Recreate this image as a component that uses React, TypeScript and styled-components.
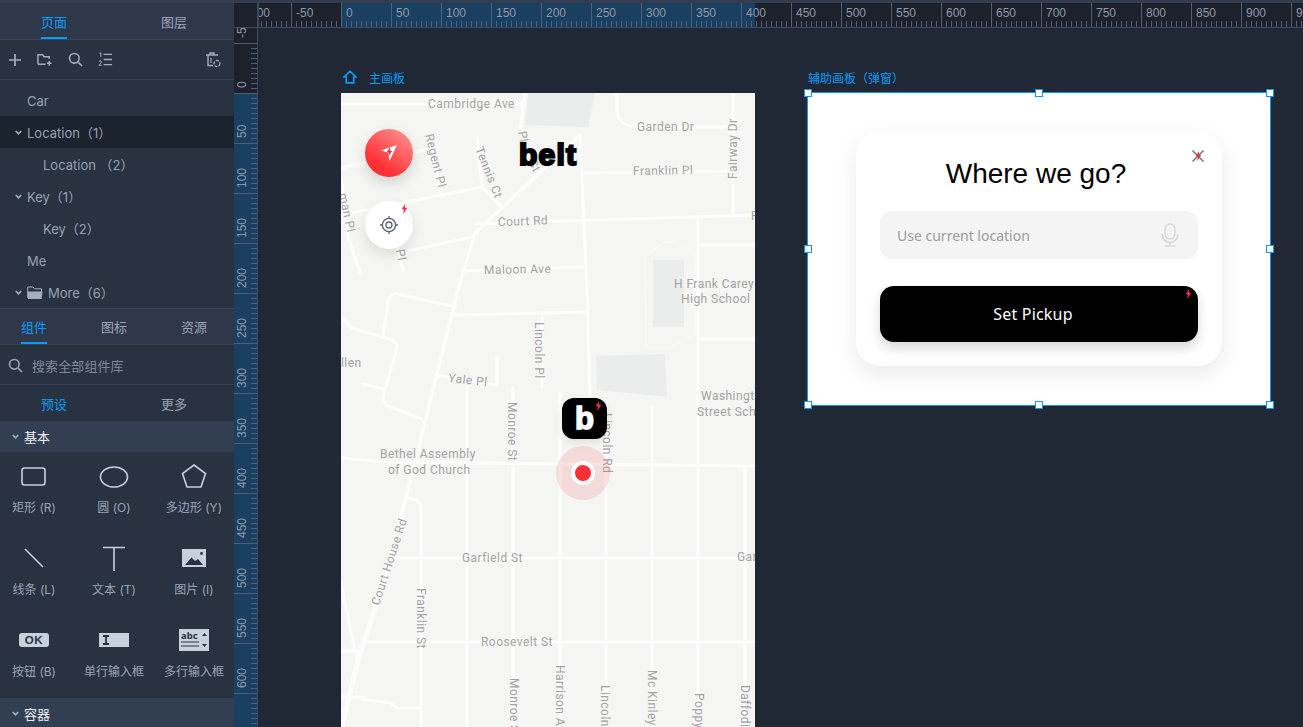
import React from "react";
import styled, { createGlobalStyle } from "styled-components";

const UI = `Inter, "Noto Sans CJK SC", sans-serif`;
const BLUE = "#0a9bf5";

const Global = createGlobalStyle`
  html, body { margin: 0; padding: 0; height: 100%; background: #202836; overflow: hidden; }
  #root { height: 100%; }
  * { box-sizing: border-box; }
`;

const Root = styled.div`
  width: 1303px; height: 727px; display: flex; flex-direction: column; overflow: hidden;
  font-family: ${UI}; background: #202836;
`;
const TopStrip = styled.div` height: 3px; flex: none; background: #323d50; `;
const Body = styled.div` flex: 1; display: flex; min-height: 0; `;

const Sidebar = styled.aside`
  width: 234px; flex: none; background: #293241; color: #9aa5b8; display: flex; flex-direction: column; overflow: hidden;
`;
const TabBar = styled.div<{ $h: number }>`
  height: ${p => p.$h}px; flex: none; display: flex; background: #2e384a; border-bottom: 1px solid #38445a;
  & > :first-child { margin-left: -6px; }
`;
const Tab = styled.div<{ $active?: boolean; $w: number }>`
  flex: none; width: ${p => p.$w}px; display: flex; justify-content: center; align-items: center; font-size: 13px;
  color: ${p => (p.$active ? BLUE : "#9aa5b8")};
`;
const TabLabel = styled.span<{ $active?: boolean }>`
  height: 100%; display: flex; align-items: center; padding-top: 2px;
  border-bottom: 2px solid ${p => (p.$active ? BLUE : "transparent")};
`;
const Toolbar = styled.div`
  height: 40px; flex: none; display: flex; align-items: center; padding: 0 13px 0 8px; gap: 15px;
  border-bottom: 1px solid #38445a; color: #a3aec0;
`;
const Spacer = styled.div` flex: 1; `;
const Tree = styled.div` flex: none; padding-top: 4px; height: 229px; border-bottom: 1px solid #38445a; `;
const TreeRow = styled.div<{ $indent: number; $selected?: boolean }>`
  height: 32px; display: flex; align-items: center; font-size: 13px; white-space: pre; color: #97a2b5;
  padding: 1px 0 0 ${p => p.$indent}px;
  background: ${p => (p.$selected ? "#1b232e" : "transparent")};
`;
const Caret = styled.svg` width: 7px; height: 5px; margin-right: 5px; flex: none; color: #a3aec0; `;
const FolderIcon = styled.svg` width: 16px; height: 14px; margin-right: 5px; flex: none; `;
const SearchRow = styled.div`
  height: 40px; flex: none; display: flex; align-items: center; gap: 9px; padding: 1px 0 0 8px;
  font-size: 13px; color: #7f8a9c; border-bottom: 1px solid #38445a; letter-spacing: 0.1px;
`;
const SubTabs = styled.div`
  height: 36px; flex: none; display: flex;
  & > :first-child { margin-left: -6px; }
`;
const SectionHead = styled.div`
  height: 31px; flex: none; display: flex; align-items: center; padding-left: 12px;
  background: #323f52; color: #eef1f5; font-size: 13px;
`;
const WidgetGrid = styled.div`
  height: 246px; flex: none; display: grid; grid-template-columns: repeat(3, 80px); grid-auto-rows: 82px; margin-left: -6px;
`;
const Widget = styled.div`
  display: flex; flex-direction: column; align-items: center; font-size: 12px; color: #9aa5b8; white-space: nowrap;
`;
const WidgetIcon = styled.svg` width: 36px; height: 32px; margin-top: 8px; flex: none; color: #c7d0dd; `;
const WidgetName = styled.span` margin-top: 7px; line-height: 18px; `;

const Workspace = styled.div` flex: 1; display: flex; flex-direction: column; min-width: 0; `;
const RulerRow = styled.div` height: 25px; flex: none; display: flex; `;
const RulerCorner = styled.div` width: 24px; flex: none; background: #1c212c; border-bottom: 1px solid #3d4a60; border-right: 1px solid #3d4a60; `;
const WorkRow = styled.div` flex: 1; display: flex; min-height: 0; `;
const RulerSvg = styled.svg` display: block; flex: none; background: #1c212c; `;
const Canvas = styled.main` flex: 1; position: relative; overflow: hidden; background: #202836; `;

const BoardLabel = styled.div<{ $x: number; $y: number }>`
  position: absolute; left: ${p => p.$x}px; top: ${p => p.$y}px; height: 16px; display: flex; align-items: center;
  gap: 12px; font-size: 12px; color: ${BLUE}; white-space: nowrap;
`;
const MapBoard = styled.section`
  position: absolute; left: 83px; top: 65px; width: 414px; height: 634px; background: #f5f5f4; overflow: hidden;
`;
const Fab = styled.div<{ $x: number; $y: number; $red?: boolean }>`
  position: absolute; left: ${p => p.$x}px; top: ${p => p.$y}px; width: 48px; height: 48px; border-radius: 50%;
  display: flex; align-items: center; justify-content: center;
  background: ${p => (p.$red ? "linear-gradient(215deg, #ff9a9a 0%, #ff2f33 75%)" : "#fff")};
  box-shadow: 0 6px 14px rgba(0, 0, 0, ${p => (p.$red ? 0.14 : 0.1)});
`;
const Belt = styled.div`
  position: absolute; left: 178px; top: 44px; font: 900 30px/36px "Liberation Sans", Arial, sans-serif; color: #000;
  -webkit-text-stroke: 2.2px #000; letter-spacing: 1.2px;
`;
const LogoTile = styled.div`
  position: absolute; left: 221px; top: 305px; width: 45px; height: 41px; border-radius: 12px; background: #000;
  display: flex; align-items: center; justify-content: center; color: #fff;
  font: 900 31px/1 "Liberation Sans", Arial, sans-serif; -webkit-text-stroke: 1.6px #fff;
  box-shadow: 0 3px 8px rgba(0, 0, 0, 0.1);
`;
const PinHalo = styled.div`
  position: absolute; left: 215px; top: 353px; width: 54px; height: 54px; border-radius: 50%;
  background: rgba(240, 110, 105, 0.2); display: flex; align-items: center; justify-content: center;
`;
const PinDot = styled.div`
  width: 24px; height: 24px; border-radius: 50%; background: #ff2f33; border: 4px solid #fff;
`;
const BoltMark = styled.svg<{ $x: number; $y: number }>`
  position: absolute; display: block; left: ${p => p.$x}px; top: ${p => p.$y}px; width: 7px; height: 10px;
`;
const ModalBoard = styled.section`
  position: absolute; left: 549px; top: 64px; width: 464px; height: 314px; background: #fff; border: 1px solid #1296f3;
  display: flex; align-items: flex-start; justify-content: center; padding-top: 38px;
`;
const Handle = styled.span<{ $x: number; $y: number }>`
  position: absolute; left: ${p => p.$x}%; top: ${p => p.$y}%; width: 8px; height: 8px; margin: -4px 0 0 -4px;
  background: #fff; border: 1px solid #1296f3;
`;
const Card = styled.div`
  position: relative; width: 366px; height: 235px; border-radius: 24px; background: #fff; padding: 23px 24px 0;
  box-shadow: 0 8px 22px rgba(0, 0, 0, 0.09);
`;
const Title = styled.h1`
  margin: 0 6px 17px 0; font: 400 28px/40px "Liberation Sans", Arial, sans-serif; color: #000; text-align: center;
`;
const InputBox = styled.div`
  height: 48px; border-radius: 12px; background: #f4f4f4; display: flex; align-items: center; justify-content: space-between;
  padding: 0 19px 0 17px; font-size: 14px; color: #9b9b9b; font-family: "Noto Sans", sans-serif;
`;
const PickupButton = styled.div`
  position: relative; margin-top: 27px; height: 56px; border-radius: 14px; background: #000; color: #fff;
  display: flex; align-items: center; justify-content: center; padding-right: 12px; font-size: 16px; letter-spacing: 0.2px;
  font-family: "Noto Sans", sans-serif; box-shadow: 0 6px 12px rgba(0, 0, 0, 0.16);
`;
const CloseWrap = styled.div`
  position: absolute; left: 335px; top: 18px; width: 14px; height: 14px;
  & > svg:first-child { display: block; }
`;

const Bolt = ({ x, y }: { x: number; y: number }) => (
  <BoltMark $x={x} $y={y} viewBox="0 0 6 9"><path d="M3.6 0 .4 4.8h2L1.8 9 5.6 3.4H3.4z" fill="#f0304f" /></BoltMark>
);

const Chevron = () => (
  <Caret viewBox="0 0 7 5"><path d="M.8 1 3.5 3.8 6.2 1" fill="none" stroke="currentColor" strokeWidth="1.7" /></Caret>
);

const ticks = (from: number, to: number) => {
  const out: number[] = [];
  for (let v = from; v <= to; v += 5) out.push(v);
  return out;
};

const TopRuler = () => {
  const W = 1045, H = 25, zero = 83;
  return (
    <RulerSvg width={W} height={H} viewBox={`0 0 ${W} ${H}`}>
      <rect x={zero} y={0} width={414} height={H} fill="#1a3f60" />
      {ticks(-100, 960).map(v => (
        <line key={v} x1={zero + v + 0.5} x2={zero + v + 0.5} y1={v % 50 === 0 ? 0 : H - 7} y2={H} stroke="#4f5f78" />
      ))}
      {ticks(-100, 960).filter(v => v % 50 === 0).map(v => (
        <text key={v} x={zero + v + 5} y={14} fontSize="12" fontFamily="Liberation Sans, Arial, sans-serif" fill="#8f99a9">{v}</text>
      ))}
      <line x1="0" x2={W} y1={H - 0.5} y2={H - 0.5} stroke="#3d4a60" />
      <line x1="0.5" x2="0.5" y1="0" y2={H} stroke="#3d4a60" />
    </RulerSvg>
  );
};

const LeftRuler = () => {
  const W = 24, H = 700, zero = 65;
  return (
    <RulerSvg width={W} height={H} viewBox={`0 0 ${W} ${H}`}>
      <rect x={0} y={zero} width={W} height={H} fill="#1a3f60" />
      {ticks(-50, 640).map(v => (
        <line key={v} y1={zero + v + 0.5} y2={zero + v + 0.5} x1={v % 50 === 0 ? 0 : W - 7} x2={W} stroke="#4f5f78" />
      ))}
      {ticks(-50, 640).filter(v => v % 50 === 0).map(v => (
        <text key={v} transform={`translate(11.5 ${zero + v - 5}) rotate(-90)`} fontSize="12" fontFamily="Liberation Sans, Arial, sans-serif" fill="#8f99a9">{v}</text>
      ))}
      <line x1={W - 0.5} x2={W - 0.5} y1="0" y2={H} stroke="#3d4a60" />
    </RulerSvg>
  );
};

const roads = [
  "M341 104H525", "M525 93 520 132", "M617 93V112Q618 127 642 127H733", "M733 93V215", "M583 173 733 171",
  "M580 135 587 290 590 400", "M580 135 475 233 458 290 398 530", "M405 500 378 600 358 660 342 727",
  "M476 224 755 215", "M341 215 482 187", "M477 137 482 187 502 207", "M427 130 440 193", "M341 168 425 150",
  "M402 252 473 237", "M397 247 403 270", "M341 177 348 237 360 272", "M465 271 583 267", "M698 218V727",
  "M700 245H755", "M455 315 587 312", "M700 339H755", "M383 335 388 302Q390 292 398 294L456 307",
  "M341 317 352 328 392 340Q398 343 397 348L383 397Q383 404 388 406L422 419", "M363 384 383 389",
  "M437 375 497 385V357", "M467 387V727", "M513 388V727", "M542 317V387", "M560 393V727", "M606 400V727",
  "M652 407V727", "M745 467V727", "M341 458 385 462 755 466", "M393 558H755", "M368 642H755", "M421 507V727",
  "M407 498 416 500Q421 501 421 507", "M341 583 358 665", "M341 651H358", "M341 697H365", "M362 699 390 703 397 708H421",
];

type Lab = { t: string; x: number; y: number; r?: number };
const labels: Lab[] = [
  { t: "Cambridge Ave", x: 428, y: 108, r: 0 }, { t: "Garden Dr", x: 637, y: 131 },
  { t: "Fairway Dr", x: 737, y: 179, r: -90 }, { t: "Regent Pl", x: 425, y: 135, r: 76 },
  { t: "Tennis Ct", x: 475, y: 149, r: 68 }, { t: "Pl", x: 518, y: 132, r: 78 }, { t: "Ct", x: 528, y: 162, r: 62 },
  { t: "Franklin Pl", x: 633, y: 175, r: -1 }, { t: "Court Rd", x: 498, y: 226, r: -2 }, { t: "R", x: 751, y: 220 },
  { t: "Maloon Ave", x: 484, y: 274, r: -1 }, { t: "H Frank Carey", x: 674, y: 288 }, { t: "High School", x: 681, y: 303 },
  { t: "man Pl", x: 339, y: 194, r: 78 }, { t: "Pl", x: 396, y: 250, r: 80 }, { t: "Lincoln Pl", x: 535, y: 322, r: 90 },
  { t: "llen", x: 341, y: 367 }, { t: "Yale Pl", x: 448, y: 382, r: 6 }, { t: "Monroe St", x: 508, y: 402, r: 90 },
  { t: "Bethel Assembly", x: 380, y: 458 }, { t: "of God Church", x: 388, y: 474 },
  { t: "Lincoln Rd", x: 603, y: 413, r: 90 }, { t: "Washingt", x: 701, y: 400 }, { t: "Street Sch", x: 697, y: 416 },
  { t: "Court House Rd", x: 379, y: 606, r: -72 }, { t: "Franklin St", x: 417, y: 588, r: 90 },
  { t: "Garfield St", x: 462, y: 562 }, { t: "Gar", x: 737, y: 561 }, { t: "Roosevelt St", x: 481, y: 646 },
  { t: "Monroe S", x: 510, y: 678, r: 90 }, { t: "Harrison A", x: 556, y: 665, r: 90 }, { t: "Lincoln", x: 601, y: 685, r: 90 },
  { t: "Mc Kinley", x: 648, y: 670, r: 90 }, { t: "Poppy", x: 695, y: 693, r: 90 }, { t: "Daffodil", x: 741, y: 685, r: 90 },
];

const MapArt = () => (
  <svg width="414" height="634" viewBox="341 93 414 634" style={{ display: "block" }}>
    <polygon points="528,93 595,93 588,127 525,125" fill="#ebeded" />
    <polygon points="596,356 665,354 667,397 597,390" fill="#ebeded" />
    <rect x="653" y="260" width="31" height="67" fill="#ebeded" />
    <path d="M645 262Q646 250 670 241 695 248 695 258V335L670 347H646Z" fill="none" stroke="#fafafa" strokeWidth="1.2" />
    <g fill="none" stroke="#fdfdfd" strokeWidth="3.2" strokeLinecap="round" strokeLinejoin="round">
      {roads.map(d => <path key={d} d={d} />)}
    </g>
    <path d="M378 600 358 660 342 727" fill="none" stroke="#fdfdfd" strokeWidth="5" />
    <g fill="#a2a2a2" fontFamily="Roboto, sans-serif" fontSize="12" letterSpacing="0.45">
      {labels.map(l => (
        <text key={l.t + l.x} transform={`translate(${l.x} ${l.y}) rotate(${l.r ?? 0})`}>{l.t}</text>
      ))}
    </g>
  </svg>
);

const pages: { t: string; i: number; caret?: boolean; sel?: boolean }[] = [
  { t: "Car", i: 27 },
  { t: "Location（1）", i: 15, caret: true, sel: true },
  { t: "Location （2）", i: 43 },
  { t: "Key（1）", i: 15, caret: true },
  { t: "Key（2）", i: 43 },
  { t: "Me", i: 27 },
];

const widgets: { name: string; art: React.ReactNode }[] = [
  { name: "矩形 (R)", art: <rect x="6" y="8" width="23" height="17" rx="2.5" fill="none" stroke="currentColor" strokeWidth="1.6" /> },
  { name: "圆 (O)", art: <ellipse cx="18" cy="17" rx="13.5" ry="10" fill="none" stroke="currentColor" strokeWidth="1.6" /> },
  { name: "多边形 (Y)", art: <polygon points="18,5 29.5,13.5 25,27 11,27 6.5,13.5" fill="none" stroke="currentColor" strokeWidth="1.6" /> },
  { name: "线条 (L)", art: <line x1="9" y1="7" x2="27" y2="25" stroke="currentColor" strokeWidth="1.6" /> },
  { name: "文本 (T)", art: <path d="M7 5.5H29M18 5.5V29" fill="none" stroke="currentColor" strokeWidth="1.6" /> },
  { name: "图片 (I)", art: <g><rect x="6" y="7" width="24" height="18" fill="currentColor" /><path d="M9 23 15.5 15.5 19 19 22 17 27 23Z" fill="#293241" /><circle cx="25.5" cy="11.5" r="1.4" fill="#293241" /></g> },
  { name: "按钮 (B)", art: <g><rect x="3" y="9" width="30" height="14" rx="3" fill="currentColor" /><text x="18" y="20.3" textAnchor="middle" fontSize="11.5" fontWeight="700" letterSpacing="0.6" fontFamily="Liberation Sans, sans-serif" fill="#293241">OK</text></g> },
  { name: "单行输入框", art: <g><rect x="3" y="9" width="30" height="14" fill="currentColor" /><path d="M7 12H13M10 12V20M7 20H13" stroke="#293241" strokeWidth="1.8" fill="none" /></g> },
  { name: "多行输入框", art: <g><rect x="3" y="5" width="30" height="22" fill="currentColor" /><text x="5" y="15" fontSize="9.5" fontWeight="700" fontFamily="Noto Sans, sans-serif" fill="#293241">abc</text><path d="M5 18H23M5 22H23" stroke="#293241" /><path d="M26 12 28.5 9 31 12ZM26 20 31 20 28.5 23Z" fill="#293241" /></g> },
];

export default function App() {
  return (
    <Root>
      <Global />
      <TopStrip />
      <Body>
        <Sidebar>
          <TabBar $h={37}>
            <Tab $w={120} $active><TabLabel $active>页面</TabLabel></Tab>
            <Tab $w={120}><TabLabel>图层</TabLabel></Tab>
          </TabBar>
          <Toolbar>
            <svg width="14" height="14" viewBox="0 0 14 14"><path d="M7 1V13M1 7H13" stroke="currentColor" strokeWidth="1.7" /></svg>
            <svg width="16" height="14" viewBox="0 0 17 14"><path d="M1 11.5V1.5H6L7.5 3.5H13V6M1 11.5H9" fill="none" stroke="currentColor" strokeWidth="1.5" /><path d="M13 8V13M10.5 10.5H15.5" stroke="currentColor" strokeWidth="1.5" /></svg>
            <svg width="15" height="15" viewBox="0 0 15 15"><circle cx="6.3" cy="6.3" r="4.8" fill="none" stroke="currentColor" strokeWidth="1.6" /><path d="M9.8 9.8 14 14" stroke="currentColor" strokeWidth="1.7" /></svg>
            <svg width="15" height="15" viewBox="0 0 16 15"><path d="M6 2H15M6 7.5H15M6 13H15" stroke="currentColor" strokeWidth="1.5" /><path d="M1.5 1 3 .3V5M1 9.5Q3.6 8 3.6 10 3.6 11 1 13.6H4" fill="none" stroke="currentColor" strokeWidth="1" /></svg>
            <Spacer />
            <svg width="16" height="16" viewBox="0 0 16 16"><path d="M1 3H13M5 3V1H9V3M3 3V13.5H8" fill="none" stroke="currentColor" strokeWidth="1.4" /><path d="M6 6V11" stroke="currentColor" strokeWidth="1.2" /><circle cx="12" cy="11.5" r="3" fill="none" stroke="currentColor" strokeWidth="1.3" strokeDasharray="3 1.2" /></svg>
          </Toolbar>
          <Tree>
            {pages.map(p => (
              <TreeRow key={p.t} $indent={p.i} $selected={p.sel}>
                {p.caret && <Chevron />}
                {p.t}
              </TreeRow>
            ))}
            <TreeRow $indent={15}>
              <Chevron />
              <FolderIcon viewBox="0 0 16 14">
                <path d="M.7 12V1H6L7.5 2.8H14.5V6" fill="none" stroke="#a3aec0" />
                <path d="M.5 5.5H15.5L14.5 13H1Z" fill="#a3aec0" />
              </FolderIcon>
              More（6）
            </TreeRow>
          </Tree>
          <TabBar $h={36}>
            <Tab $w={80} $active><TabLabel $active>组件</TabLabel></Tab>
            <Tab $w={80}><TabLabel>图标</TabLabel></Tab>
            <Tab $w={80}><TabLabel>资源</TabLabel></Tab>
          </TabBar>
          <SearchRow>
            <svg width="15" height="15" viewBox="0 0 15 15" color="#9aa5b8"><circle cx="6.3" cy="6.3" r="4.8" fill="none" stroke="currentColor" strokeWidth="1.6" /><path d="M9.8 9.8 14 14" stroke="currentColor" strokeWidth="1.7" /></svg>
            搜索全部组件库
          </SearchRow>
          <SubTabs>
            <Tab $w={120} $active>预设</Tab>
            <Tab $w={120}>更多</Tab>
          </SubTabs>
          <SectionHead><Chevron />基本</SectionHead>
          <WidgetGrid>
            {widgets.map(w => (
              <Widget key={w.name}>
                <WidgetIcon viewBox="0 0 36 32">{w.art}</WidgetIcon>
                <WidgetName>{w.name}</WidgetName>
              </Widget>
            ))}
          </WidgetGrid>
          <SectionHead><Chevron />容器</SectionHead>
        </Sidebar>

        <Workspace>
          <RulerRow>
            <RulerCorner />
            <TopRuler />
          </RulerRow>
          <WorkRow>
            <LeftRuler />
            <Canvas>
              <BoardLabel $x={85} $y={41}>
                <svg width="14" height="14" viewBox="0 0 14 14"><path d="M1 7 7 1.2 13 7H10.8V12.8H3.2V7Z" fill="none" stroke={BLUE} strokeWidth="1.7" /></svg>
                主画板
              </BoardLabel>
              <MapBoard>
                <MapArt />
                <Fab $x={24} $y={36} $red>
                  <svg width="18" height="18" viewBox="0 0 18 18"><path d="M1 6.5 17 1 9.5 17 8 8.5Z" fill="#fff" /></svg>
                  <Bolt x={21} y={18} />
                </Fab>
                <Fab $x={24} $y={108}>
                  <svg width="20" height="20" viewBox="0 0 20 20" fill="none" stroke="#5b6170" strokeWidth="1.3"><circle cx="10" cy="10" r="6.6" /><circle cx="10" cy="10" r="3" /><path d="M10 1V4M10 16V19M1 10H4M16 10H19" /></svg>
                  <Bolt x={36} y={3} />
                </Fab>
                <Belt>belt</Belt>
                <LogoTile>
                  b
                  <Bolt x={33} y={3} />
                </LogoTile>
                <PinHalo><PinDot /></PinHalo>
              </MapBoard>

              <BoardLabel $x={550} $y={41}>辅助画板（弹窗）</BoardLabel>
              <ModalBoard>
                {[[0, 0], [50, 0], [100, 0], [0, 50], [100, 50], [0, 100], [50, 100], [100, 100]].map(([x, y]) => (
                  <Handle key={`${x}-${y}`} $x={x} $y={y} />
                ))}
                <Card>
                  <CloseWrap>
                    <svg width="14" height="14" viewBox="0 0 14 14"><path d="M1.5 1.5 12.5 12.5M12.5 1.5 1.5 12.5" stroke="#777" strokeWidth="1.5" /></svg>
                    <Bolt x={3.5} y={2} />
                  </CloseWrap>
                  <Title>Where we go?</Title>
                  <InputBox>
                    Use current location
                    <svg width="18" height="24" viewBox="0 0 18 24" fill="none" stroke="#d9d9d9" strokeWidth="1.6"><rect x="4" y="1" width="10" height="15" rx="5" /><path d="M1.5 11V12.5A7.5 7 0 0 0 16.5 12.5V11M9 19.5V23M3.5 23H14.5" /></svg>
                  </InputBox>
                  <PickupButton>
                    Set Pickup
                    <Bolt x={305} y={3} />
                  </PickupButton>
                </Card>
              </ModalBoard>
            </Canvas>
          </WorkRow>
        </Workspace>
      </Body>
    </Root>
  );
}
